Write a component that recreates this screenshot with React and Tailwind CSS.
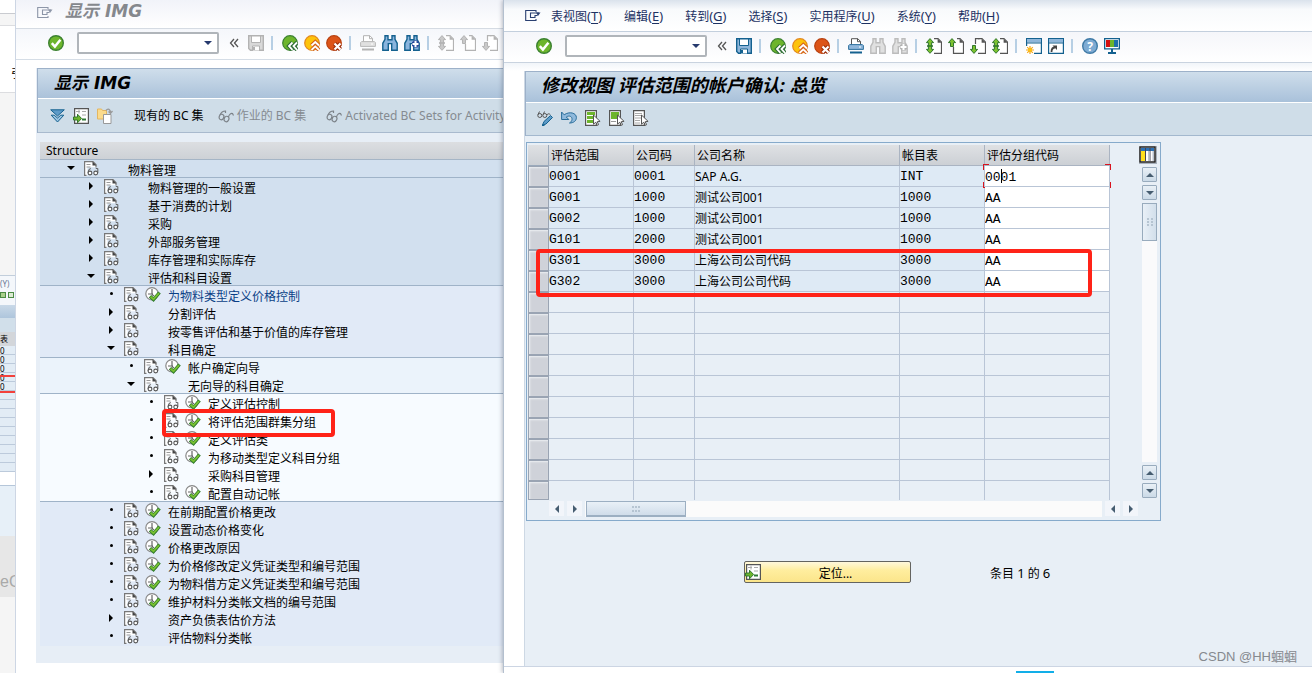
import React, { useState } from 'react';
import clsx from 'clsx';

const SANS = "font-['Noto_Sans','Noto_Sans_CJK_SC',sans-serif]";
const MONO = "font-['Liberation_Mono','Noto_Sans_CJK_SC',monospace]";
const TITLE = "font-['DejaVu_Sans','Noto_Sans_CJK_SC',sans-serif]";

const Svg = ({ w = 16, h = 16, children }) => (
    <svg width={w} height={h} viewBox={`0 0 ${w} ${h}`} fill="none" className="block shrink-0" aria-hidden="true">
        {children}
    </svg>
);

/* ---------- toolbar icons ---------- */

const CheckIcon = () => (
    <Svg>
        <circle cx="8" cy="8" r="7.3" fill="#6db52c" stroke="#3b8130" strokeWidth="1.4" />
        <path d="M3.8 8.2 6.9 11.6 12.4 4.8" stroke="#fff" strokeWidth="2.5" />
    </Svg>
);

const SaveIcon = ({ off }) => (
    <Svg>
        <path d="M.7.7h14.6v14.6H2.5L.7 13.5z" fill={off ? '#d9d9d9' : '#8fb6da'} stroke={off ? '#b3b3b3' : '#14618f'} strokeWidth="1.4" />
        <path d="M3.5 1h9v6.5h-9z" fill="#fff" stroke={off ? '#b3b3b3' : '#14618f'} />
        <path d="M4.5 11h7v5h-7z" fill="#fff" stroke={off ? '#b3b3b3' : '#14618f'} />
        <path d="M5 12h2v3H5z" fill={off ? '#b3b3b3' : '#14618f'} />
    </Svg>
);

const BackIcon = () => (
    <Svg>
        <circle cx="8" cy="8" r="7.3" fill="#6db52c" stroke="#3b8130" strokeWidth="1.2" />
        <path d="M10.5 7.5 7 11l3.5 3.8M15 7.5 11.5 11l3.5 3.8" stroke="#2c6b35" strokeWidth="4" />
        <path d="M10.5 7.5 7 11l3.5 3.8M15 7.5 11.5 11l3.5 3.8" stroke="#fff" strokeWidth="1.8" />
    </Svg>
);

const ExitIcon = () => (
    <Svg>
        <circle cx="8" cy="8" r="7.3" fill="#fdc30a" stroke="#e3881d" strokeWidth="1.2" />
        <path d="M7.5 10.5 11.3 7l3.7 3.5M7.5 15 11.3 11.4 15 15" stroke="#d4631b" strokeWidth="4" />
        <path d="M7.5 10.5 11.3 7l3.7 3.5M7.5 15 11.3 11.4 15 15" stroke="#fff" strokeWidth="1.8" />
    </Svg>
);

const CancelIcon = () => (
    <Svg>
        <circle cx="8" cy="8" r="7.3" fill="#dc5418" stroke="#b8400f" strokeWidth="1.2" />
        <path d="m8.5 8.5 6 6m0-6-6 6" stroke="#9c2f0c" strokeWidth="4.4" />
        <path d="m8.5 8.5 6 6m0-6-6 6" stroke="#fff" strokeWidth="2.2" />
    </Svg>
);

const PrintIcon = ({ off }) => (
    <Svg>
        <path d="M3.5 7V.7h6.3l2.7 2.7V7" fill="#fff" stroke={off ? '#b3b3b3' : '#555'} />
        <path d="M9.5.7v3h3" stroke={off ? '#b3b3b3' : '#555'} />
        <path d="M1.6 6.6h12.8l1 1v3.8H.6V7.6z" fill={off ? '#e0e0e0' : '#8fb6da'} stroke={off ? '#b8b8b8' : '#2f719e'} />
        <path d="M2 14.5h12" stroke={off ? '#b3b3b3' : '#14618f'} strokeWidth="2" />
        <path d="M11 9h2" stroke="#fff" />
    </Svg>
);

const FindIcon = ({ off, more }) => (
    <Svg>
        <path
            d="M3 .7h3v4h4v-4h3v3.6l2.2 4v7H9.7V8.6H6.3v6.7H.8v-7L3 4.3z"
            fill={off ? '#e0e0e0' : '#8ab4dd'}
            stroke={off ? '#bcbcbc' : '#14618f'}
            strokeWidth="1.4"
        />
        {more && <path d="M11.5 5.5v7M8 9h7" stroke={off ? '#b3b3b3' : '#2b4b9b'} strokeWidth="4.6" />}
        {more && <path d="M11.5 6v6M8.5 9h6" stroke="#fff" strokeWidth="2" />}
    </Svg>
);

const PageIcon = ({ off, up, down }) => {
    const line = off ? '#b3b3b3' : '#555';
    const fill = off ? '#c9c9c9' : '#7cc22f';
    const edge = off ? '#b3b3b3' : '#33772f';
    return (
        <Svg>
            <path d="M5.5.7h6l4 4v10.6h-10z" fill="#fff" />
            <path d={up && !down ? 'M9 .7h3l3.5 3.5v11.1h-10V9' : 'M8 .7h4l3.5 3.5v11.1H8'} stroke={line} strokeWidth="1.2" />
            <path d="M11.6.7v4h4z" fill={line} />
            {up && down && <path d="M4 .6 7.6 4.6H5.6v6.800h2L4 15.3.4 11.4h2V4.600h-2z" fill={fill} stroke={edge} />}
            {up && down && <path d="M1 8h6" stroke={edge} strokeWidth="1.6" />}
            {up && !down && <path d="M4 .6 7.6 4.6H5.5v3.9h-3V4.6H.4z" fill={fill} stroke={edge} />}
            {down && !up && <path d="M4 15.4 7.6 11.4H5.5V7.5h-3v3.9H.4z" fill={fill} stroke={edge} />}
            {down && !up && <path d="M5.5 6V.7h4" stroke={line} strokeWidth="1.2" />}
        </Svg>
    );
};

const NewSessionIcon = () => (
    <Svg>
        <path d="M.6.6h14.8v14.8H.6z" fill="#fff" stroke="#14618f" strokeWidth="1.2" />
        <path d="M1 1h14v3.5H1z" fill="#8fb6da" />
        <path d="M0 5h16" stroke="#14618f" />
        <path d="M0 8h8v8H0z" fill="#fff" />
        <path d="M4 8v8M0 12h8M1.2 9.2l5.6 5.6M6.8 9.2l-5.6 5.6" stroke="#f5a61a" strokeWidth="1.2" />
        <circle cx="4" cy="12" r="2" fill="#fcc014" />
    </Svg>
);

const ShortcutIcon = () => (
    <Svg>
        <path d="M.6.6h14.8v14.8H.6z" fill="#fff" stroke="#14618f" strokeWidth="1.2" />
        <path d="M1 1h14v3.5H1z" fill="#8fb6da" />
        <path d="M0 5h16" stroke="#14618f" />
        <path d="M3.5 14c0-3 1-4.5 3.5-4.5" stroke="#444" strokeWidth="1.8" />
        <path d="M4.5 7.5H9V12z" fill="#444" />
    </Svg>
);

const HelpIcon = () => (
    <Svg>
        <circle cx="8" cy="8" r="7.3" fill="#7eabd3" stroke="#3f7aa6" strokeWidth="1.4" />
        <text x="8" y="12.5" textAnchor="middle" fontSize="12" fontWeight="700" fontFamily="Noto Sans, sans-serif" fill="#fff">?</text>
    </Svg>
);

const MonitorIcon = () => (
    <Svg>
        <path d="M.6.6h14.8v10.3H.6z" fill="#fff" stroke="#14618f" strokeWidth="1.4" />
        <path d="M2 2h4v7H2z" fill="#d50f0f" />
        <path d="M6 2h4v7H6z" fill="#6db52c" />
        <path d="M10 2h4v7h-4z" fill="#1d6faa" />
        <path d="M8 11v3M4 15h8" stroke="#14618f" strokeWidth="2" />
    </Svg>
);

const SystemMenuIcon = ({ color }) => (
    <Svg h={13}>
        <path d="M11 3V1.500H.7v10H11V10" stroke={color} strokeWidth="1.1" />
        <path d="M14 4H5.500v4.500h4.500V6.500h2.500" stroke={color} strokeWidth="1.1" />
        <path d="M11 3.500h4.500L13 7z" fill={color} />
    </Svg>
);

/* ---------- application bar icons ---------- */

const ExpandIcon = () => (
    <Svg w={15} h={14}>
        <path d="M.7.8h13.6L7.5 7z" fill="#5e9bc8" stroke="#14618f" />
        <path d="M1.2 6.2h3L7.5 9l3.3-2.8h3L7.5 13z" fill="#9cc4e2" stroke="#14618f" />
    </Svg>
);

const ListGoIcon = () => (
    <Svg>
        <path d="M1.6.6h13.8v14.8H1.6z" fill="#fff" stroke="#555" strokeWidth="1.2" />
        <path d="M3 3.5h4M9 3.5h4M6 1.5v4M9 7h4" stroke="#aaa" />
        <path d="M9 11.5h4" stroke="#2f7a35" strokeWidth="2" />
        <path d="M.5 9h4V6.2L8.6 10.5 4.5 14.8V12h-4z" fill="#6db52c" stroke="#33772f" />
    </Svg>
);

const FolderCopyIcon = () => (
    <Svg>
        <path d="M.5 3V1h4l1 1.5h4V11H.5z" fill="#fbdb8c" stroke="#e4b660" />
        <path d="M6.5 6.5H14v9H6.5z" fill="#fff" stroke="#999" />
        <path d="M9 2.5c2-2.5 4.5-1 4.5 2M11.5 3.5l2 1.8L15.5 3" stroke="#999" strokeWidth="1.3" />
    </Svg>
);

const GlassesIcon = () => (
    <Svg h={14}>
        <ellipse cx="3.5" cy="8" rx="2.3" ry="2.8" transform="rotate(25 3.5 8)" stroke="#7c8288" strokeWidth="1.2" />
        <ellipse cx="8.5" cy="10" rx="2.3" ry="2.8" transform="rotate(25 8.5 10)" stroke="#7c8288" strokeWidth="1.2" />
        <path d="M2 6C3 3.500 5.500 2 7.500 2v2M10.500 8c.5-2.500 2.500-4 4-3.500l1 2M5.500 8.500l1.500.5" stroke="#7c8288" strokeWidth="1.2" />
    </Svg>
);

const DisplayChangeIcon = () => (
    <Svg>
        <circle cx="2.8" cy="5.5" r="2" stroke="#555" />
        <circle cx="7.8" cy="5.5" r="2" stroke="#555" />
        <path d="M1 4.5 2.5 1.5M6.2 4.5 7.5 1.5M9.8 5c1-1.500 2-1.500 3.500-.5" stroke="#555" />
        <path d="m5.5 15 1.500-3.500 6.500-6 2 2-6.500 6.500z" fill="#5e9bc8" stroke="#14618f" />
        <path d="M5 15.5h2.5" stroke="#14618f" strokeWidth="1.5" />
    </Svg>
);

const UndoIcon = () => (
    <Svg>
        <path d="M.6 2v7.5h7.2L5.3 7c3-2 6-.5 5.700 2.500-.2 1.500-1 2.500-2.500 3.500 4 0 6.900-2 6.900-5.500C15.400 3 8.500 1 3.200 4.800z" fill="#8fb9dc" stroke="#2a6e9b" />
    </Svg>
);

const SelectRowsIcon = ({ mode }) => (
    <Svg>
        <path d="M.6.6h10.8v14.8H.6z" fill="#fff" stroke="#555" strokeWidth="1.2" />
        {mode === 'all' && <path d="M2 3.5h8M2 7.5h8M2 11.5h8" stroke="#6db52c" strokeWidth="3" />}
        {mode === 'block' && <path d="M2 2h8v7H2z" fill="#6db52c" />}
        {mode === 'block' && <path d="M2 11.5h5" stroke="#999" />}
        {mode === 'none' && <path d="M2 3.5h7M2 5.5h7M2 8h7M2 10.5h5M2 13h5" stroke="#aaa" />}
        <path d="M8.5 5v9.2l2.3-2 1.6 3.2 1.2-.7-1.4-3 2.9-.3z" fill="#fff" stroke="#555" />
    </Svg>
);

/* ---------- tree icons ---------- */

const DocIcon = () => (
    <Svg w={15} h={15}>
        <path d="M.6 14.4V.6h8.8L12 3.2v3H3.5v8.2z" fill="#fff" />
        <path d="M2.5 14.4H.6V.6H9L12 3.6V6.5" stroke="#777" strokeWidth="1.2" />
        <path d="M8.500.5v4H12.500z" fill="#444" />
        <path d="M2.5 3.5h4M2.5 6h4" stroke="#999" />
        <path d="M6.8 7.5C5 8 4.200 9.500 4.200 12M13.800 7.500h-2M13.800 7.500V12" stroke="#666" strokeWidth="1.1" />
        <circle cx="6" cy="12" r="1.9" fill="#fff" stroke="#555" strokeWidth="1.1" />
        <circle cx="11.7" cy="12" r="1.9" fill="#fff" stroke="#555" strokeWidth="1.1" />
    </Svg>
);

const ActivityIcon = () => (
    <Svg h={15}>
        <circle cx="7" cy="6.8" r="6.2" fill="#fff" stroke="#888" strokeWidth="1.2" />
        <path d="M7 2v5.500M3 7h5M7 7.500 9 9" stroke="#666" strokeWidth="1.2" />
        <path d="M5 9.200 8.500 12.500 14.500 5.500" stroke="#2d7a2a" strokeWidth="3.4" />
        <path d="M5.500 9.700 8.500 12.200 14 6.200" stroke="#79c132" strokeWidth="1.8" />
    </Svg>
);

const Triangle = ({ dir, color = '#000' }) => {
    const shapes = {
        right: 'M3 1v8l4-4z',
        left: 'M7 1v8L3 5z',
        down: 'M1 3h8L5 7z',
        up: 'M1 7h8L5 3z',
    };
    return <Svg w={10} h={10}><path d={shapes[dir]} fill={color} /></Svg>;
};

/* ---------- shared parts ---------- */

const Tool = ({ label, children }) => (
    <button type="button" aria-label={label} className="block shrink-0">{children}</button>
);

const Sep = () => <span className="ml-px mr-[3px] h-[14px] w-[2px] shrink-0 bg-[#b7cfe4]" />;

const CommandBar = ({ id, active }) => (
    <div className="flex items-center gap-1.5">
        <Tool label="Enter"><CheckIcon /></Tool>
        <div className="ml-[7px] flex h-[22px] w-[142px] shrink-0 items-center rounded-[2px] border-2 border-[#b0b5ba] bg-white pr-1">
            <input id={id} aria-label="Command" className="min-w-0 flex-1 bg-transparent px-1 text-xs outline-none" />
            <button type="button" aria-label="History"><Triangle dir="down" color="#263a6e" /></button>
        </div>
        <button type="button" aria-label="Hide" className="ml-1 mr-[3px] w-[10px]">
            <Svg w={10} h={10}><path d="M5 1 1.5 5 5 9M9 1 5.5 5 9 9" stroke="#555" strokeWidth="1.3" /></Svg>
        </button>
        <Tool label="Save"><SaveIcon off={!active} /></Tool>
        <Sep />
        <Tool label="Back"><BackIcon /></Tool>
        <Tool label="Exit"><ExitIcon /></Tool>
        <Tool label="Cancel"><CancelIcon /></Tool>
        <Sep />
        <Tool label="Print"><PrintIcon off={!active} /></Tool>
        <Tool label="Find"><FindIcon off={active} /></Tool>
        <Tool label="Find next"><FindIcon off={active} more /></Tool>
        <Sep />
        <Tool label="First page"><PageIcon off={!active} up down /></Tool>
        <Tool label="Previous page"><PageIcon off={!active} up /></Tool>
        <Tool label="Next page"><PageIcon off={!active} down /></Tool>
        {active && (
            <>
                <Tool label="Last page"><PageIcon up down /></Tool>
                <Sep />
                <Tool label="New session"><NewSessionIcon /></Tool>
                <Tool label="Shortcut"><ShortcutIcon /></Tool>
                <Sep />
                <Tool label="Help"><HelpIcon /></Tool>
                <Tool label="Layout"><MonitorIcon /></Tool>
            </>
        )}
    </div>
);

/* ---------- IMG window ---------- */

const tree = [
    { level: 0, type: 'open', text: '物料管理', line: true },
    { level: 1, type: 'closed', text: '物料管理的一般设置' },
    { level: 1, type: 'closed', text: '基于消费的计划' },
    { level: 1, type: 'closed', text: '采购' },
    { level: 1, type: 'closed', text: '外部服务管理' },
    { level: 1, type: 'closed', text: '库存管理和实际库存' },
    { level: 1, type: 'open', text: '评估和科目设置', line: true },
    { level: 2, type: 'leaf', run: true, text: '为物料类型定义价格控制', current: true },
    { level: 2, type: 'closed', text: '分割评估' },
    { level: 2, type: 'closed', text: '按零售评估和基于价值的库存管理' },
    { level: 2, type: 'open', text: '科目确定', line: true },
    { level: 3, type: 'leaf', run: true, text: '帐户确定向导' },
    { level: 3, type: 'open', text: '无向导的科目确定', line: true },
    { level: 4, type: 'leaf', run: true, text: '定义评估控制' },
    { level: 4, type: 'leaf', run: true, text: '将评估范围群集分组', marked: true },
    { level: 4, type: 'leaf', run: true, text: '定义评估类' },
    { level: 4, type: 'leaf', run: true, text: '为移动类型定义科目分组' },
    { level: 4, type: 'closed', text: '采购科目管理' },
    { level: 4, type: 'leaf', run: true, text: '配置自动记帐', line: true },
    { level: 2, type: 'leaf', run: true, text: '在前期配置价格更改' },
    { level: 2, type: 'leaf', run: true, text: '设置动态价格变化' },
    { level: 2, type: 'leaf', run: true, text: '价格更改原因' },
    { level: 2, type: 'leaf', run: true, text: '为价格修改定义凭证类型和编号范围' },
    { level: 2, type: 'leaf', run: true, text: '为物料借方定义凭证类型和编号范围' },
    { level: 2, type: 'leaf', run: true, text: '维护材料分类帐文档的编号范围' },
    { level: 2, type: 'closed', text: '资产负债表估价方法' },
    { level: 2, type: 'leaf', text: '评估物料分类帐' },
];

const levelStyle = [
    'pl-[26px] bg-[#d2e0ef]',
    'pl-[46px] bg-[#d2e0ef]',
    'pl-[66px] bg-[#e1eaf7]',
    'pl-[86px] bg-[#ebf3fb]',
    'pl-[106px] bg-[#f7fbff]',
];

const TreeRow = ({ node }) => (
    <li
        className={clsx(
            'relative flex h-[18px] items-center whitespace-nowrap border-b',
            levelStyle[node.level],
            node.line ? 'border-[#9fb3c8]' : 'border-transparent'
        )}
    >
        <span className="flex w-[10px] justify-center pb-0.5">
            {node.type === 'leaf'
                ? <span className="h-[3px] w-[3px] rounded-full bg-black" />
                : <Triangle dir={node.type === 'open' ? 'down' : 'right'} />}
        </span>
        <span className="ml-2"><DocIcon /></span>
        <span className="ml-1.5 w-4">{node.run && <ActivityIcon />}</span>
        <span className={clsx('ml-[7px] pt-[3px] leading-[17px]', node.current && 'text-[#0a3f86]')}>{node.text}</span>
        {node.marked && (
            <span className="absolute -top-[3px] left-[122px] z-10 h-[28px] w-[173px] rounded-[4px] border-4 border-[#ff2318]" />
        )}
    </li>
);

const ImgWindow = () => (
    <section className="flex w-[488px] shrink-0 flex-col overflow-hidden border-l border-[#cdd6e4] bg-white">
        <div className="flex h-[29px] items-start gap-3 border-b border-[#d5dbe3] bg-linear-to-b from-[#f1f3f9] to-white pl-[21px]">
            <span className="pt-1.5"><SystemMenuIcon color="#8d96a8" /></span>
            <h1 className={clsx(TITLE, 'text-[17px] font-bold italic leading-[22px] text-[#85888d]')}>显示 IMG</h1>
        </div>
        <div className="flex h-[31px] items-center border-b border-[#d5dde6] bg-linear-to-b from-[#f5f7fb] to-white pb-0.5 pl-8">
            <CommandBar id="img-command" />
        </div>
        <div className="mb-2.5 ml-5 mt-2 flex-1 bg-[#e7eef6]">
            <div className="ml-px border-l border-t border-[#9db1c9]">
                <div className="h-[30px] border-b border-white bg-linear-to-b from-[#cfdeeb] to-[#abc2da] pl-4">
                    <h2 className={clsx(TITLE, 'text-[17px] font-bold italic leading-7')}>显示 IMG</h2>
                </div>
                <div className="flex h-[34px] items-center whitespace-nowrap border-b border-[#a9bace] bg-[#cfdde8] pl-3">
                    <Tool label="Expand"><ExpandIcon /></Tool>
                    <span className="ml-2 flex gap-2">
                        <Tool label="Position"><ListGoIcon /></Tool>
                        <Tool label="Copy"><FolderCopyIcon /></Tool>
                    </span>
                    <span className="ml-2 h-[14px] w-px bg-[#9fbedb]" />
                    <button type="button" className="ml-[13px]">现有的 BC 集</button>
                    <button type="button" className="ml-[14px] flex items-center gap-[3px] text-[#858b91]"><GlassesIcon />作业的 BC 集</button>
                    <button type="button" className="ml-5 flex items-center gap-[3px] text-[#858b91]"><GlassesIcon />Activated BC Sets for Activity</button>
                </div>
            </div>
            <div className="ml-1 mt-[9px]">
                <div className="h-[18px] border-b border-[#a5b5c6] bg-linear-to-b from-[#dcdee1] to-[#cdd1d6] pl-1.5 leading-[17px]">Structure</div>
                <ul>
                    {tree.map((node) => <TreeRow key={node.text} node={node} />)}
                </ul>
            </div>
        </div>
    </section>
);

/* ---------- maintenance view window ---------- */

const menus = [
    ['表视图', 'T'],
    ['编辑', 'E'],
    ['转到', 'G'],
    ['选择', 'S'],
    ['实用程序', 'U'],
    ['系统', 'Y'],
    ['帮助', 'H'],
];

const columns = ['评估范围', '公司码', '公司名称', '帐目表', '评估分组代码'];

const entries = [
    ['0001', '0001', 'SAP A.G.', 'INT', '0001'],
    ['G001', '1000', '测试公司001', '1000', 'AA'],
    ['G002', '1000', '测试公司001', '1000', 'AA'],
    ['G101', '2000', '测试公司001', '1000', 'AA'],
    ['G301', '3000', '上海公司公司代码', '3000', 'AA'],
    ['G302', '3000', '上海公司公司代码', '3000', 'AA'],
];

const FocusCorners = () => (
    <>
        <span className="absolute -left-0.5 -top-0.5 h-[6px] w-[6px] border-l border-t border-[#d9141e]" />
        <span className="absolute -right-0.5 -top-0.5 h-[6px] w-[6px] border-r border-t border-[#d9141e]" />
        <span className="absolute -bottom-0.5 -left-0.5 h-[6px] w-[6px] border-b border-l border-[#d9141e]" />
        <span className="absolute -bottom-0.5 -right-0.5 h-[6px] w-[6px] border-b border-r border-[#d9141e]" />
        <span className="absolute left-4 top-[3px] h-[14px] w-px bg-black" />
    </>
);

const EntryTable = () => {
    const [groups, setGroups] = useState(entries.map((entry) => entry[4]));
    const blanks = Array.from({ length: 10 }, (_, i) => i);
    const rowHead = 'border border-[#9aa4b3] bg-[#cfd2d9] p-0 shadow-[inset_1px_1px_2px_#eef0f3]';

    return (
        <table className="w-[582px] table-fixed border-separate border-spacing-0">
            <colgroup>
                <col className="w-[21px]" />
                <col className="w-[85px]" />
                <col className="w-[61px]" />
                <col className="w-[205px]" />
                <col className="w-[85px]" />
                <col className="w-[125px]" />
            </colgroup>
            <thead>
                <tr className="h-[21px] bg-linear-to-b from-[#dfe1e4] to-[#cbcfd4]">
                    <th className="border-b border-r border-[#9aa9bb] p-0" aria-label="Select" />
                    {columns.map((name) => (
                        <th key={name} scope="col" className="border-b border-r border-[#aab4c2] p-0 pl-0.5 pt-0.5 text-left font-normal leading-[18px]">{name}</th>
                    ))}
                </tr>
            </thead>
            <tbody>
                {entries.map((entry, row) => (
                    <tr key={entry[0]} className="h-[21px]">
                        <td className={rowHead} />
                        {entry.slice(0, 4).map((cell, i) => (
                            <td
                                key={columns[i]}
                                className={clsx(
                                    'border-b border-r border-[#b9c5d6] bg-[#deeaf5] p-0 pt-0.5 leading-[18px]',
                                    i !== 2 && MONO,
                                    i !== 2 && 'text-[13px]'
                                )}
                            >
                                {cell}
                            </td>
                        ))}
                        <td className="relative border-b border-r border-[#b9c5d6] bg-white p-0">
                            <input
                                aria-label={`${columns[4]} ${entry[0]}`}
                                value={groups[row]}
                                onChange={(e) => setGroups(groups.map((g, i) => (i === row ? e.target.value : g)))}
                                className={clsx(MONO, 'block h-5 w-full bg-transparent pt-0.5 text-[13px] leading-[18px] outline-none')}
                            />
                            {row === 0 && <FocusCorners />}
                        </td>
                    </tr>
                ))}
                {blanks.map((i) => {
                    const last = i === blanks.length - 1;
                    return (
                        <tr key={i} className={last ? 'h-[19px]' : 'h-[21px]'}>
                            <td className={rowHead} />
                            {columns.map((name) => (
                                <td key={name} className={clsx('border-r border-[#b9c5d6] p-0', !last && 'border-b')} />
                            ))}
                        </tr>
                    );
                })}
            </tbody>
        </table>
    );
};

const ScrollButton = ({ dir, flat }) => (
    <button
        type="button"
        aria-label={`Scroll ${dir}`}
        className={clsx(
            'flex h-[15px] w-[15px] shrink-0 items-center justify-center',
            flat ? 'bg-[#f2f5fa]' : 'rounded-[1px] border border-[#98abbd] bg-linear-to-b from-[#e9f0f6] to-[#cbdae7]'
        )}
    >
        <Triangle dir={dir} color="#465d70" />
    </button>
);

const Grip = () => (
    <Svg w={9} h={6}>
        <path d="M0 1h2M3 1h2M6 1h2M0 5h2M3 5h2M6 5h2" stroke="#a9b9c8" strokeWidth="1.5" />
    </Svg>
);

const ConfigIcon = () => (
    <Svg w={17} h={17}>
        <path d="M1 1h15v15H1z" fill="#fff" stroke="#222" strokeWidth="1.5" />
        <path d="M2 2h13v3H2z" fill="#2b70b5" />
        <path d="M2 5h4v10H2z" fill="#ffdf1c" />
        <path d="M6.5 2v13M11 2v13" stroke="#445" />
        <path d="M9 5h1.500v10H9zM13.500 5H15v10h-1.500z" fill="#bac2ce" />
    </Svg>
);

const EntryGrid = () => (
    <div className="ml-px mt-1.5 w-[635px] border border-[#86aacb] pl-px pt-0.5">
        <div className="flex justify-between pr-[3px]">
            <div className="relative">
                <EntryTable />
                <span className="absolute left-2 top-[104px] h-[48px] w-[556px] rounded-[4px] border-4 border-[#ff2318]" />
            </div>
            <div className="flex flex-col items-end pb-0.5 pt-px">
                <button type="button" aria-label="Configuration" className="mb-[3px] border-b border-r border-[#a7b0bb] bg-[#dde1e6]"><ConfigIcon /></button>
                <div className="flex flex-1 flex-col gap-[3px]">
                    <ScrollButton dir="up" />
                    <ScrollButton dir="down" />
                    <div className="flex-1 bg-[#fafafb]">
                        <div className="flex h-[38px] w-[15px] items-center justify-center border border-[#98abbd] bg-linear-to-r from-[#e9f0f7] to-[#d2dfeb]">
                            <Svg w={6} h={9}>
                                <path d="M1 0v2M1 3v2M1 6v2M5 0v2M5 3v2M5 6v2" stroke="#a9b9c8" strokeWidth="1.5" />
                            </Svg>
                        </div>
                    </div>
                    <ScrollButton dir="up" />
                    <ScrollButton dir="down" />
                </div>
            </div>
        </div>
        <div className="flex gap-[3px] pb-[3px] pl-[21px] pr-[22px] pt-px">
            <ScrollButton dir="left" flat />
            <ScrollButton dir="right" flat />
            <div className="flex-1 bg-[#fbfbfb] pl-px">
                <div className="flex h-4 w-[100px] items-center justify-center border border-b-2 border-[#9cafc2] bg-linear-to-b from-[#e9f0f7] to-[#d0ddea]">
                    <Grip />
                </div>
            </div>
            <ScrollButton dir="left" flat />
            <ScrollButton dir="right" flat />
        </div>
    </div>
);

const ViewWindow = () => (
    <section className="relative z-20 flex min-w-0 flex-1 flex-col border-l border-[#b4c0cf] bg-white shadow-[-1px_0_4px_rgba(60,70,90,0.35)]">
        <nav className="flex h-8 items-center border-b border-[#c3cfdd] bg-linear-to-b from-[#dae2ec] via-[#f8fafc] via-30% to-white pl-[21px] text-[#1d3263]">
            <SystemMenuIcon color="#2a4071" />
            <ul className="ml-2.5 flex gap-[22px] whitespace-nowrap pt-[3px]">
                {menus.map(([name, key]) => (
                    <li key={name}>
                        <button type="button">{name}<span className="text-[13px]">(<u className="underline-offset-2">{key}</u>)</span></button>
                    </li>
                ))}
            </ul>
        </nav>
        <div className="flex h-[31px] items-center border-b border-[#c9d3df] bg-linear-to-b from-[#f5f6fa] to-white pb-0.5 pl-8">
            <CommandBar id="view-command" active />
        </div>
        <div className="h-2 bg-linear-to-b from-[#f1f5f9] to-white" />
        <div className="ml-5 flex-1 border-l border-[#cdd8e4] bg-[#e8eff6]">
            <div className="border-l border-t border-[#9db1c9]">
                <div className="h-[31px] border-b border-white bg-linear-to-b from-[#cfdeeb] to-[#a9c1da] pl-[15px]">
                    <h2 className="text-lg font-bold italic leading-[26px]">修改视图 评估范围的帐户确认: 总览</h2>
                </div>
                <div className="flex h-[33px] items-center gap-2 border-b border-[#a3b8ce] bg-[#cfdde8] pb-0.5 pl-[11px]">
                    <Tool label="Display / change"><DisplayChangeIcon /></Tool>
                    <Tool label="Undo"><UndoIcon /></Tool>
                    <Tool label="Select all"><SelectRowsIcon mode="all" /></Tool>
                    <Tool label="Select block"><SelectRowsIcon mode="block" /></Tool>
                    <Tool label="Deselect all"><SelectRowsIcon mode="none" /></Tool>
                </div>
            </div>
            <EntryGrid />
            <div className="mt-10 flex items-center gap-[79px] pl-[219px]">
                <button
                    type="button"
                    className="flex h-[22px] w-[167px] items-center rounded-[2px] border border-[#646460] bg-linear-to-b from-[#fff8dc] via-[#ffee9f] via-40% to-[#fbe58a]"
                >
                    <ListGoIcon />
                    <span className="flex-1 pt-[3px]">定位...</span>
                </button>
                <span className="pt-[3px]">条目 <span className="text-[13px]">1</span> 的 <span className="text-[13px]">6</span></span>
            </div>
        </div>
        <div className="flex h-[7px] items-end border-t border-[#ccd5e3] bg-white pl-[512px]">
            <span className="h-0.5 w-[38px] bg-[#12aee8]" />
        </div>
        <span className="absolute bottom-2 right-[15px] font-['Liberation_Sans','Noto_Sans_CJK_SC',sans-serif] text-[13px] leading-4 text-[#85898e]">CSDN @HH蝈蝈</span>
    </section>
);

/* ---------- page edge behind both windows ---------- */

const miniRows = ['0', '0', '0', '0', '0', '', '', '', '', '', '', '', '', ''];

const PageEdge = () => (
    <aside className="flex w-[15px] shrink-0 flex-col overflow-hidden bg-[#f5f5f5]">
        <div className="h-[14px] border-b border-[#c9cbd0] bg-white" />
        <div className="h-3 border-b border-[#dcdde0]" />
        <div className="h-[67px] border-b border-[#dcdde0] bg-white pl-[11px] pt-[39px] leading-[17px] whitespace-nowrap">引</div>
        <div className="h-[182px]" />
        <div className="h-[30px] border-t border-[#c2cedb] bg-[#f4f7fb] text-[8px] leading-4 text-[#6b7896]">
            (Y)
            <div className="flex gap-0.5">
                <span className="h-[6px] w-[6px] border border-[#4b8b45] bg-[#a9d08c]" />
                <span className="h-[6px] w-[6px] border border-[#4b8b45] bg-[#dcebd3]" />
            </div>
        </div>
        <div className="h-[13px] bg-linear-to-b from-[#c9d9e8] to-[#aec5dc]" />
        <div className="h-[14px] bg-[#d1dfea]" />
        <div className="h-[14px] bg-[#d3d6da] text-[8px] leading-[14px]">表</div>
        <div className="relative">
            {miniRows.map((cell, i) => (
                <div key={i} className="h-[9px] border-b border-[#bccadb] bg-[#e2ecf5] text-[8px] leading-[9px]">{cell}</div>
            ))}
            <span className="absolute left-0 top-[29px] h-[18px] w-full border-y-2 border-[#f2413c]" />
        </div>
        <div className="h-[14px] border-b border-[#b5c6d9] bg-white" />
        <div className="h-[50px] bg-[#e7f0f8]" />
        <div className="h-[61px] bg-[#e7e7e7] pt-[34px] font-['Liberation_Sans',sans-serif] text-base leading-6 text-[#a9a9a9]">eC</div>
    </aside>
);

const App = () => (
    <main className={clsx(SANS, 'flex min-h-screen overflow-hidden bg-white text-xs text-black')}>
        <PageEdge />
        <ImgWindow />
        <ViewWindow />
    </main>
);

export default App;
